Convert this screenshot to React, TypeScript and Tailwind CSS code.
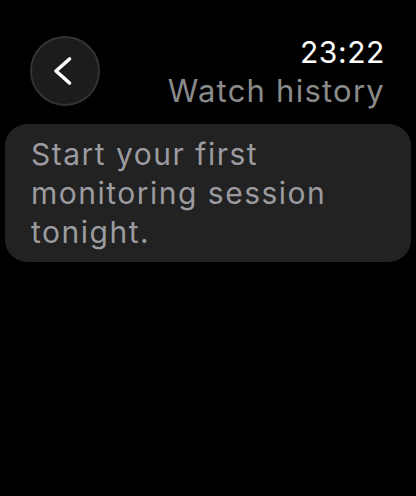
import React from "react";

export default function App() {
  return (
    <div
      className="w-[416px] h-[496px] bg-black overflow-hidden"
      style={{ fontFamily: "Inter, 'Noto Sans', sans-serif" }}
    >
      <div className="flex items-start justify-between pl-[30px] pr-[31px] pt-[36px]">
        <button className="w-[70px] h-[70px] rounded-full bg-[#1c1c1c] border-2 border-[#333333] flex items-center justify-center">
          <svg width="24" height="32" viewBox="0 0 24 32" fill="none">
            <path
              d="M16.5 4 L3 16 L16.5 28"
              stroke="#ffffff"
              strokeWidth="3.6"
              strokeLinecap="round"
              strokeLinejoin="round"
            />
          </svg>
        </button>
        <div className="flex flex-col items-end">
          <div className="text-white text-[30px] leading-[36px] mt-[-2px] tracking-[0.02em]">23:22</div>
          <div className="text-[#8a8a8a] text-[31px] leading-[38px] mt-[2px] tracking-[0.04em]">Watch history</div>
        </div>
      </div>
      <div className="mx-[5px] mt-[14px] rounded-[22px] bg-[#222222] pl-[26px] pr-[30px] pt-[11px] pb-[10px]">
        <p className="text-[#9b9ba0] text-[30px] leading-[39px] tracking-[0.05em]">
          Start your first monitoring session tonight.
        </p>
      </div>
    </div>
  );
}
